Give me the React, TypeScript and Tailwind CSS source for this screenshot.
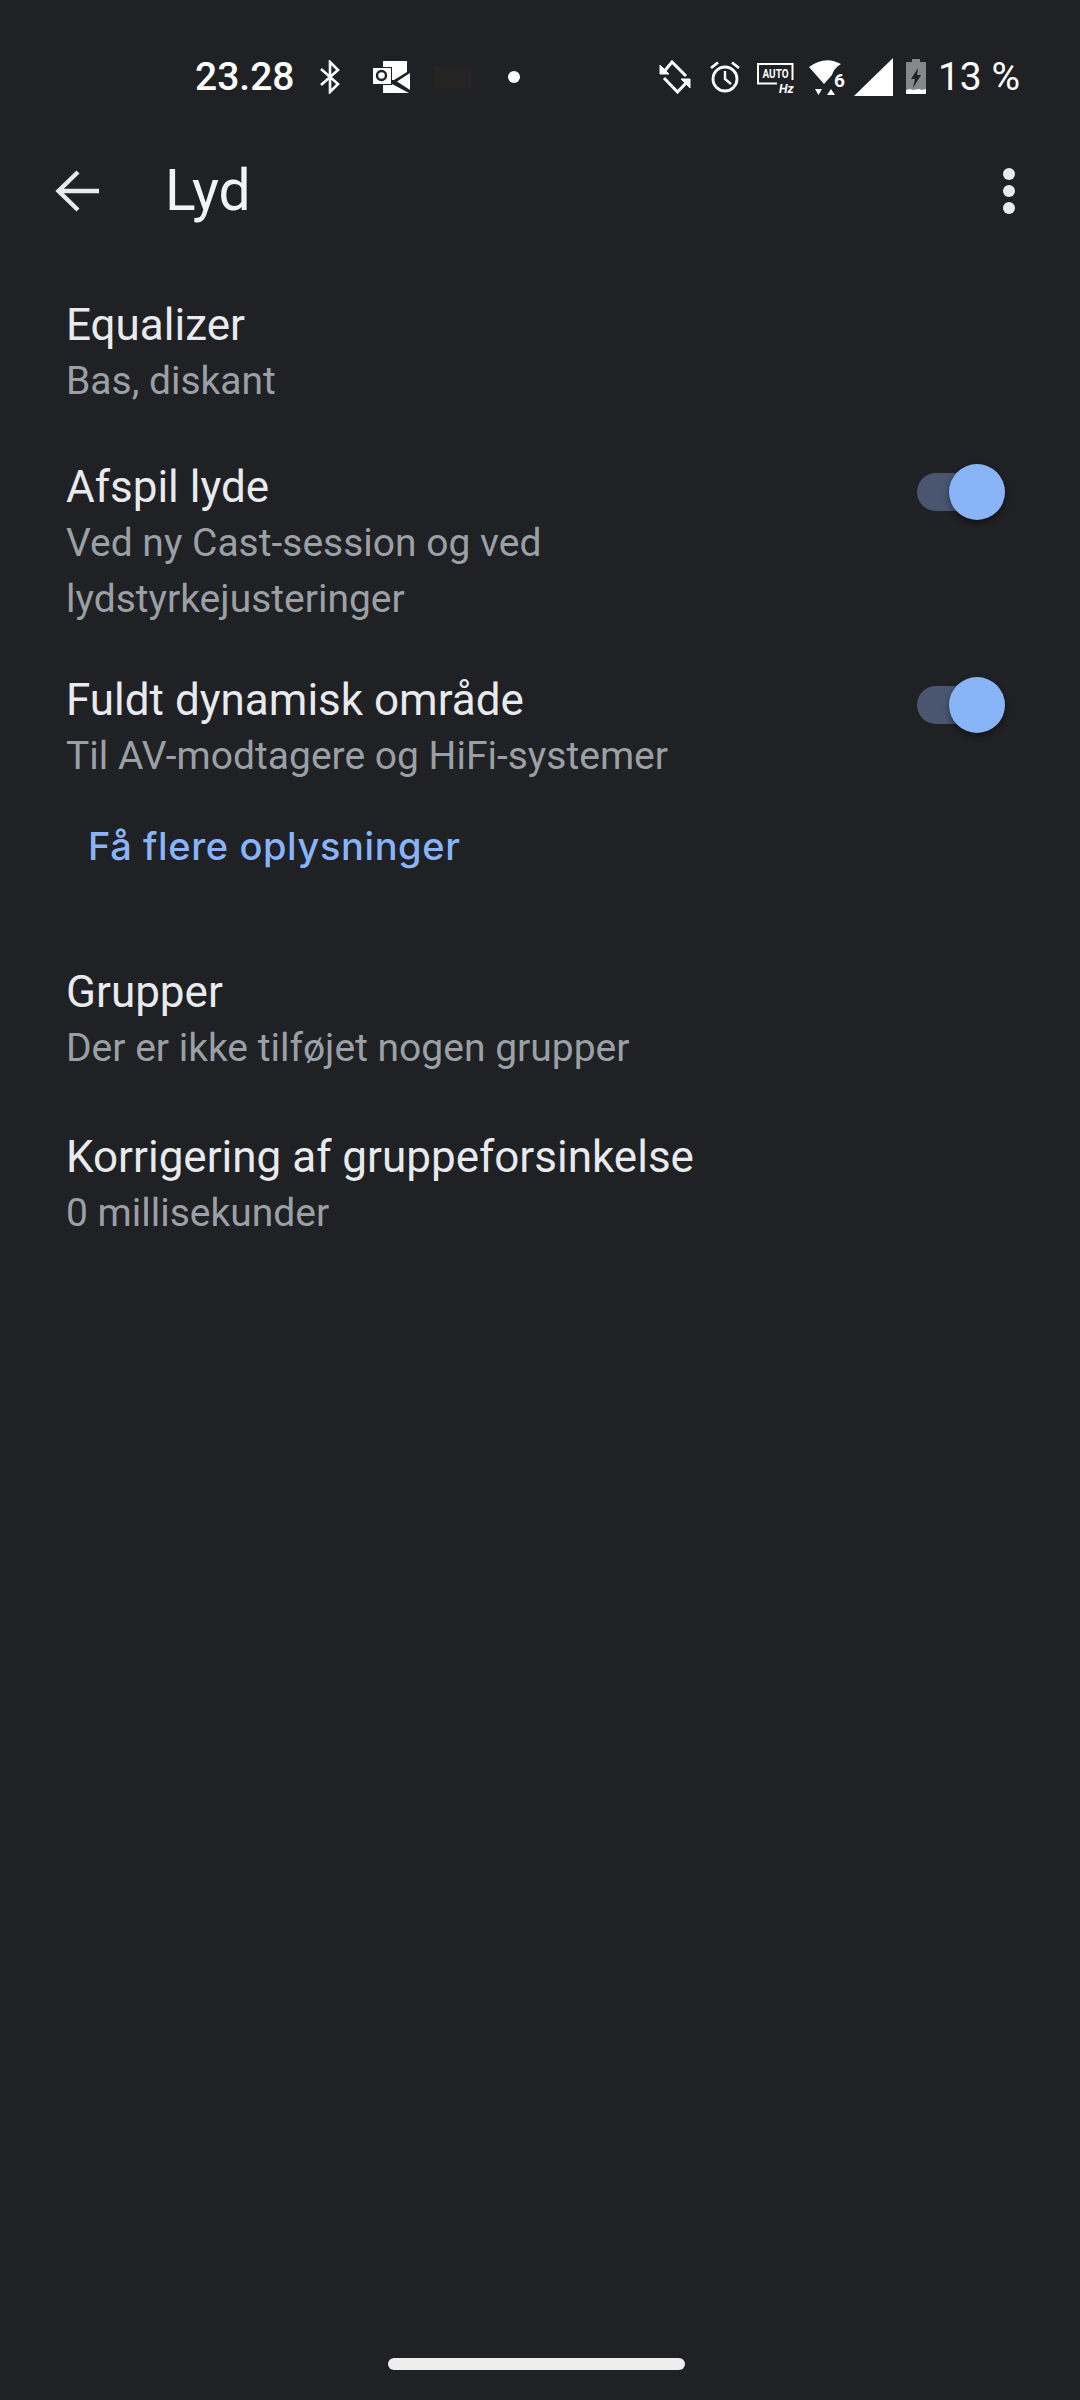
const font = { fontFamily: "Roboto, 'Liberation Sans', sans-serif" };

function Toggle() {
  return (
    <div className="relative w-[88px] h-[56px] shrink-0 mt-[5px]">
      <div className="absolute left-0 top-[9px] w-[72px] h-[38px] rounded-full bg-[#4a5670]" />
      <div className="absolute left-[32px] top-0 w-[56px] h-[56px] rounded-full bg-[#8ab4f8] shadow-[0_3px_6px_rgba(0,0,0,0.45)]" />
    </div>
  );
}

function Row({ title, sub, toggle, className }: { title: string; sub: string[]; toggle?: boolean; className: string }) {
  return (
    <div className={`flex items-start justify-between pl-[66px] pr-[75px] ${className}`}>
      <div>
        <div className="text-[44px] leading-[56px] text-[#e8eaed]">{title}</div>
        {sub.map((s) => (
          <div key={s} className="text-[39px] leading-[56.5px] text-[#9aa0a6]">{s}</div>
        ))}
      </div>
      {toggle && <Toggle />}
    </div>
  );
}

function StatusBar() {
  return (
    <div className="flex items-center h-[40px] mt-[57px] pl-[195px] pr-[60px]">
      <span className="text-[39px] leading-[40px] font-medium text-white w-[98px] shrink-0">23.28</span>
      <svg width="22" height="34" viewBox="0 0 22 34" fill="none" stroke="#fff" strokeWidth="2.6" className="ml-[26px] shrink-0">
        <path d="M2 9 L19 24 L11 32 V2 L19 10 L2 25" />
      </svg>
      <svg width="40" height="34" viewBox="0 0 40 34" className="ml-[31px] shrink-0">
        <path d="M11 1 H35 V12 L22 20 H11 Z" fill="#fff" />
        <path d="M25 21.5 L38 13 V30 Z" fill="#fff" />
        <path d="M11 24 H20 L37 33 H11 Z" fill="#fff" />
        <rect x="0.5" y="7.5" width="19" height="17" fill="#fff" stroke="#202124" strokeWidth="1" />
        <circle cx="9.5" cy="15.5" r="4.5" fill="none" stroke="#202124" strokeWidth="2.4" />
      </svg>
      <div className="ml-[23px] w-[36px] h-[21px] bg-[#252423] shrink-0" />
      <div className="ml-[37px] w-[12px] h-[12px] rounded-full bg-white shrink-0" />

      <svg width="32" height="34" viewBox="0 0 32 34" fill="none" stroke="#fff" strokeWidth="3" className="ml-auto shrink-0">
        <path d="M4 13 L13 2 L27 16" />
        <path d="M1 5 V14 H10 Z" fill="#fff" strokeWidth="1" />
        <path d="M5 18 L18.5 32 L28 22" />
        <path d="M22 19 H31 V28 Z" fill="#fff" strokeWidth="1" />
      </svg>
      <svg width="30" height="32" viewBox="0 0 30 32" fill="none" stroke="#fff" strokeWidth="2.8" className="ml-[19px] shrink-0">
        <circle cx="15" cy="18" r="12" />
        <path d="M15 10 V18 L21 23" strokeWidth="2.4" />
        <path d="M1 7 L8 1.5 M29 7 L22 1.5" />
      </svg>
      <svg width="37" height="34" viewBox="0 0 37 34" fill="none" className="ml-[17px] mt-[6px] shrink-0">
        <path d="M20 20.5 H1 V1 H35.5 V17" stroke="#fff" strokeWidth="2" />
        <text x="18.5" y="15" fontSize="12.5" fontWeight="700" fontFamily="Roboto, sans-serif" fill="#fff" textAnchor="middle" textLength="26" lengthAdjust="spacingAndGlyphs">AUTO</text>
        <text x="22" y="30" fontSize="12.5" fontWeight="700" fontStyle="italic" fontFamily="Roboto, sans-serif" fill="#fff">Hz</text>
      </svg>
      <svg width="36" height="37" viewBox="0 0 36 37" className="ml-[15px] shrink-0">
        <path d="M0 8 Q16 -4 32 5 Q25 9 23 16 L15 25 Z" fill="#fff" />
        <path d="M6 30 H13 L9.5 36 Z M18 36 H26 L22 30 Z" fill="#fff" />
        <text x="25" y="28" fontSize="19" fontWeight="700" fontFamily="Roboto, sans-serif" fill="#fff">6</text>
      </svg>
      <svg width="40" height="39" viewBox="0 0 40 39" className="ml-[9px] shrink-0">
        <path d="M0 38 L39 0 V38 Z" fill="#fff" />
      </svg>
      <svg width="22" height="36" viewBox="0 0 22 36" className="ml-[11px] shrink-0">
        <path d="M7 0 H15 V3 H20 Q21 3 21 4 V34 Q21 35 20 35 H2 Q1 35 1 34 V4 Q1 3 2 3 H7 Z" fill="#85878a" />
        <path d="M1 31 L5 30 L8 31 L14 30 L17 31 L21 30 V34 Q21 35 20 35 H2 Q1 35 1 34 Z" fill="#fff" />
        <path d="M13 9 L6 20 H10 L8 29 L16 16 H12 Z" fill="#202124" />
      </svg>
      <span className="ml-[11px] text-[39px] leading-[40px] text-white whitespace-pre shrink-0">13 %</span>
    </div>
  );
}

export default function App() {
  return (
    <div className="w-[1080px] h-[2400px] bg-[#202124] flex flex-col overflow-hidden" style={font}>
      <StatusBar />
      <div className="flex items-center h-[72px] mt-[58px] shrink-0">
        <svg width="44" height="44" viewBox="0 0 44 44" fill="none" stroke="#e8eaed" strokeWidth="4.4" className="ml-[55px]">
          <path d="M44 22 H3.5 M23 3 L3.5 22 L23 41" />
        </svg>
        <span className="ml-[66px] text-[57px] leading-[72px] text-[#f1f3f4]">Lyd</span>
        <div className="ml-auto mr-[65px] flex flex-col gap-[5px]">
          <div className="w-[12px] h-[12px] rounded-full bg-[#e8eaed]" />
          <div className="w-[12px] h-[12px] rounded-full bg-[#e8eaed]" />
          <div className="w-[12px] h-[12px] rounded-full bg-[#e8eaed]" />
        </div>
      </div>
      <Row title="Equalizer" sub={["Bas, diskant"]} className="mt-[70px]" />
      <Row title="Afspil lyde" sub={["Ved ny Cast-session og ved", "lydstyrkejusteringer"]} toggle className="mt-[49px]" />
      <Row title="Fuldt dynamisk område" sub={["Til AV-modtagere og HiFi-systemer"]} toggle className="mt-[44px]" />
      <div className="pl-[88px] mt-[37px] text-[38px] leading-[50px] tracking-[0.6px] font-medium text-[#8ab4f8]" style={{ fontFamily: "Inter, sans-serif" }}>Få flere oplysninger</div>
      <Row title="Grupper" sub={["Der er ikke tilføjet nogen grupper"]} className="mt-[93px]" />
      <Row title="Korrigering af gruppeforsinkelse" sub={["0 millisekunder"]} className="mt-[52px]" />
      <div className="mt-auto mb-[30px] ml-[388px] w-[297px] h-[12px] rounded-full bg-[#eeeeee]" />
    </div>
  );
}
